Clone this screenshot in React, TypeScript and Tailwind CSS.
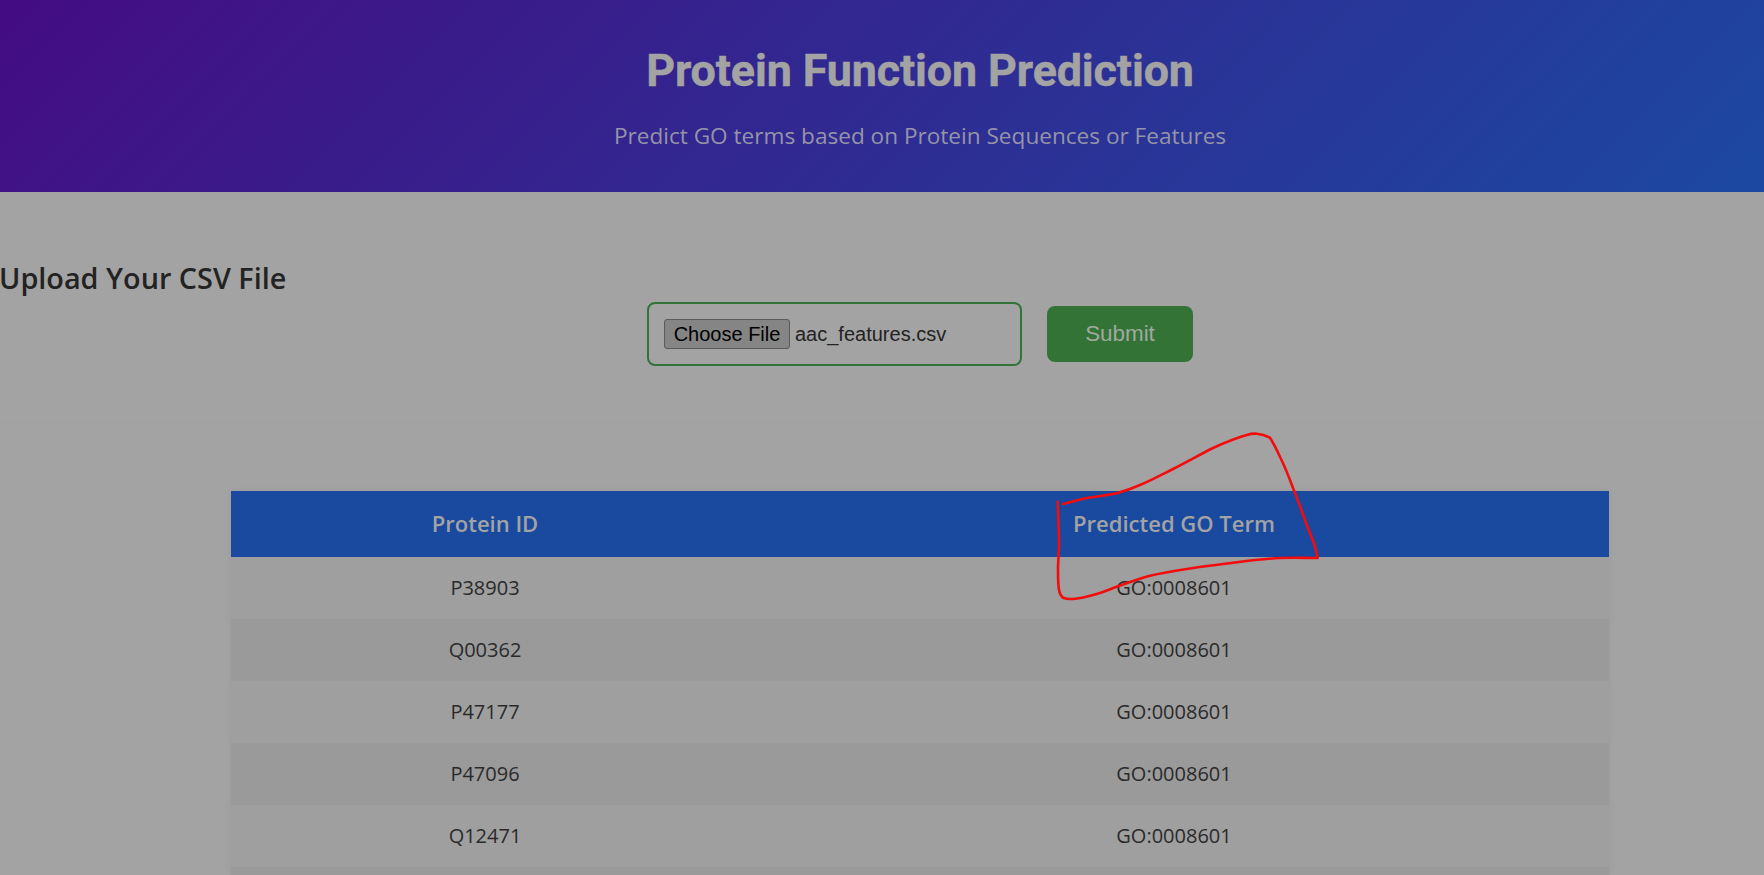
const rows = [
  { id: "P38903", go: "GO:0008601" },
  { id: "Q00362", go: "GO:0008601" },
  { id: "P47177", go: "GO:0008601" },
  { id: "P47096", go: "GO:0008601" },
  { id: "Q12471", go: "GO:0008601" },
];

const openSans = "font-['Open_Sans','Noto_Sans',sans-serif]";
const arial = "font-['Liberation_Sans',Arial,sans-serif]";

export default function App() {
  return (
    <div className="relative h-[875px] overflow-hidden bg-[#a3a3a3]">
      <div className={`w-[1840px] ${openSans}`}>
        {/* Header */}
        <header className="flex h-[192px] flex-col items-center bg-[linear-gradient(135deg,#440c82,#1a4ba3)] pt-[45px] text-[#a3a3a3]">
          <h1 className="font-['Roboto',sans-serif] text-[44.8px] leading-[52px] font-bold tracking-[-0.1px] [-webkit-text-stroke:0.5px_#a3a3a3]">Protein Function Prediction</h1>
          <p className="mt-[24px] text-[22.6px] leading-[30px] text-[#9594a8]">Predict GO terms based on Protein Sequences or Features</p>
        </header>

        {/* Upload */}
        <section className="h-[231px] pt-[67px] shadow-[0_1px_2px_rgba(0,0,0,0.015)]">
          <h2 className="-ml-[1px] text-[28.8px] leading-[38px] font-semibold text-[#232323]">Upload Your CSV File</h2>
          <form className={`mt-[5px] flex items-center justify-center gap-[25px] ${arial}`}>
            <div className="flex h-[64px] w-[375px] items-center rounded-[8px] border-2 border-[#33733a] pl-[15px] text-[#222]">
              <button type="button" className="h-[30px] w-[126px] rounded-[3px] border border-[#5a5a5a] bg-[#858585] pb-[1px] text-[20px] leading-none text-black">
                Choose File
              </button>
              <span className="-mt-[1px] ml-[5px] text-[20px]">aac_features.csv</span>
            </div>
            <button type="button" className="h-[56px] w-[146px] rounded-[8px] bg-[#337336] pb-[1px] text-[22.4px] text-[#a0a9a0]">
              Submit
            </button>
          </form>
        </section>

        {/* Results table */}
        <div className="mx-auto mt-[68px] w-[1378px] shadow-[0_0_6px_rgba(0,0,0,0.06)]">
          <div className="grid h-[66px] grid-cols-[508px_870px] items-center bg-[#1a4aa0] pb-[2px] text-center text-[22px] font-semibold text-[#a3a3a3]">
            <div>Protein ID</div>
            <div>Predicted GO Term</div>
          </div>
          {rows.map((row, i) => (
            <div
              key={row.id}
              className={`grid h-[62px] grid-cols-[508px_870px] items-center text-center text-[20px] text-[#2a2a2a] ${i % 2 === 0 ? "bg-[#9f9f9f]" : "bg-[#9a9a9a]"}`}
            >
              <div>{row.id}</div>
              <div>{row.go}</div>
            </div>
          ))}
          <div className="h-[62px] bg-[#9a9a9a]" />
        </div>
      </div>

      {/* Hand-drawn annotation */}
      <svg className="absolute top-0 left-0 h-[875px] w-[1764px]" viewBox="0 0 1764 875" fill="none">
        <path
          d="M1063.3 504 L1083 498.7 C1095 496.5 1107 495.5 1116.7 493.3 C1125 491 1132 488.5 1140 485 C1152 480 1162 474.5 1173 469 C1187 462 1200 454.5 1213 448 C1225 442.5 1236 438 1246.7 435 C1250 434 1253 433.5 1256.7 433.7 C1262 434 1266 435.5 1270 437.7 C1274 444 1277 450 1280 456.7 C1285 467 1289 477 1293 488 C1298 500 1302.5 513 1306.7 525 C1310 533 1313 540 1315 546.7 C1316 551 1317 554.5 1317.7 558 C1305 558 1293 557.5 1280 558 C1264 559 1249 560.5 1233 562.7 C1217 565 1202 566.5 1186.7 569 C1174 571 1162 573 1150 575.7 C1138 579 1127 583 1116.7 586.7 C1108 590 1101 593 1093 595 C1086 597 1080 598.5 1073 599 C1068 599 1065 598.5 1063 597.7 C1060.5 595.5 1059.5 593 1059 590 C1058 584 1058 577 1058 570 C1058 561 1059 552 1059 543 C1059 529 1058 515 1057.7 501.7"
          stroke="#f40b0b"
          strokeWidth="2.6"
          strokeLinecap="round"
          strokeLinejoin="round"
        />
      </svg>
    </div>
  );
}
